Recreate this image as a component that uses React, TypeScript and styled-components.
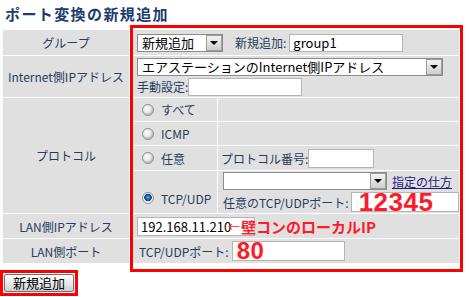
import React from 'react';
import styled, { createGlobalStyle } from 'styled-components';

const GlobalStyle = createGlobalStyle`
  body {
    margin: 0;
    background: #fff;
    font-family: "Noto Sans CJK JP", "Liberation Sans", sans-serif;
  }
`;

const Page = styled.div`
  position: relative;
  width: 469px;
  height: 297px;
  overflow: hidden;
`;

const Title = styled.h1`
  margin: 0 0 5px 0;
  padding: 3px 0 0 5px;
  height: 21px;
  font-size: 15px;
  line-height: 21px;
  font-weight: bold;
  color: #1c3b6e;
  letter-spacing: 1.4px;
`;

const Table = styled.table`
  margin-left: 2px;
  width: 458px;
  table-layout: fixed;
  border-collapse: separate;
  border-spacing: 1px;
  font-size: 12px;
  color: #283c5e;
`;

const Row = styled.tr<{ $h: number }>`
  height: ${(p) => p.$h}px;
`;

const Label = styled.td`
  background: #e0e0e0;
  text-align: center;
  vertical-align: middle;
  padding: 0;
  white-space: nowrap;
`;

const Cell = styled.td<{ $pl?: number }>`
  background: #e0e0e0;
  vertical-align: middle;
  padding: 0 0 0 ${(p) => p.$pl ?? 7}px;
  white-space: nowrap;
`;

const Line = styled.div<{ $gap?: number }>`
  display: flex;
  align-items: center;
  gap: ${(p) => p.$gap ?? 0}px;
`;

const Stack = styled.div`
  display: flex;
  flex-direction: column;
  gap: 2px;
`;

const SelectBox = styled.div<{ $w: number }>`
  box-sizing: border-box;
  width: ${(p) => p.$w}px;
  height: 18px;
  display: flex;
  align-items: center;
  justify-content: space-between;
  background: #fff;
  border: 1px solid #8c8c8c;
  font-size: 13px;
  color: #000;
  padding-left: 4px;
  line-height: 16px;
`;

const DropBtn = styled.span`
  box-sizing: border-box;
  width: 16px;
  height: 16px;
  display: flex;
  align-items: center;
  justify-content: center;
  background: linear-gradient(#f4f4f4, #cfcfcf);
  border: 1px solid #9a9a9a;
  &::after {
    content: '';
    border-left: 4px solid transparent;
    border-right: 4px solid transparent;
    border-top: 4px solid #000;
  }
`;

const Input = styled.div<{ $w: number; $h?: number }>`
  box-sizing: border-box;
  width: ${(p) => p.$w}px;
  height: ${(p) => p.$h ?? 18}px;
  background: #fff;
  border: 1px solid #b4b4b4;
  font-size: 13px;
  color: #000;
  padding-left: 3px;
  display: flex;
  align-items: center;
  overflow: visible;
`;

const Caption = styled.span`
  font-size: 12px;
  color: #283c5e;
`;

const Link = styled.a`
  margin-left: 5px;
  font-size: 12px;
  color: #1a1a80;
  text-decoration: underline;
`;

const Radio = styled.span<{ $on?: boolean }>`
  box-sizing: border-box;
  display: inline-block;
  width: 12px;
  height: 12px;
  border-radius: 50%;
  border: 1px solid #8e8e8e;
  background: ${(p) =>
    p.$on
      ? 'radial-gradient(circle at 50% 45%, #6ab4ff 0, #1668b8 2px, #0b3c78 3.5px, #e8e8e8 4px, #ffffff 6px)'
      : 'radial-gradient(circle at 40% 35%, #ffffff 0, #e6e6e6 4px, #bdbdbd 6px)'};
  margin-right: 7px;
`;

const RadioText = styled.span`
  font-size: 12px;
`;

const BigRed = styled.span<{ $size: number }>`
  font-family: "Liberation Sans", "DejaVu Sans", sans-serif;
  font-weight: bold;
  font-size: ${(p) => p.$size}px;
  line-height: 18px;
  color: #ff1a2a;
  letter-spacing: 0.5px;
`;

const Note = styled.span`
  display: inline-flex;
  align-items: center;
  margin-left: -27px;
  color: #ff1a2a;
  font-weight: bold;
  font-size: 15px;
  position: relative;
`;

const Arrow = styled.span`
  font-weight: normal;
  font-size: 12px;
  margin-right: 1px;
`;

const Marker = styled.div`
  position: absolute;
  left: 130px;
  top: 25px;
  width: 333px;
  height: 247px;
  box-sizing: border-box;
  border: 3px solid #ff0000;
  pointer-events: none;
`;

const ButtonFrame = styled.div`
  display: inline-block;
  margin-top: 6px;
  border: 3px solid #ff0000;
  padding: 1px;
`;

const Button = styled.button`
  box-sizing: border-box;
  width: 70px;
  height: 18px;
  padding: 0;
  font-family: "Noto Sans CJK JP", sans-serif;
  font-size: 13px;
  line-height: 14px;
  color: #000;
  border: 1px solid #707070;
  border-radius: 2px;
  background: linear-gradient(#fdfdfd, #e4e4e4 60%, #cfcfcf);
  display: block;
`;

const App: React.FC = () => {
  return (
    <Page>
      <GlobalStyle />
      <Title>ポート変換の新規追加</Title>
      <Table>
        <colgroup>
          <col style={{ width: 126 }} />
          <col style={{ width: 87 }} />
          <col style={{ width: 241 }} />
        </colgroup>
        <tbody>
          <Row $h={25}>
            <Label>グループ</Label>
            <Cell colSpan={2}>
              <Line>
                <SelectBox $w={86}>
                  新規追加
                  <DropBtn />
                </SelectBox>
                <Caption style={{ marginLeft: 12 }}>新規追加:</Caption>
                <Input $w={114} style={{ marginLeft: 3 }}>group1</Input>
              </Line>
            </Cell>
          </Row>
          <Row $h={41}>
            <Label>Internet側IPアドレス</Label>
            <Cell colSpan={2}>
              <Stack>
                <SelectBox $w={306}>
                  エアステーションのInternet側IPアドレス
                  <DropBtn />
                </SelectBox>
                <Line>
                  <Caption>手動設定:</Caption>
                  <Input $w={114}></Input>
                </Line>
              </Stack>
            </Cell>
          </Row>
          <Row $h={23}>
            <Label rowSpan={4}>プロトコル</Label>
            <Cell $pl={12}>
              <Line>
                <Radio />
                <RadioText>すべて</RadioText>
              </Line>
            </Cell>
            <Cell $pl={5}></Cell>
          </Row>
          <Row $h={23}>
            <Cell $pl={12}>
              <Line>
                <Radio />
                <RadioText>ICMP</RadioText>
              </Line>
            </Cell>
            <Cell $pl={5}></Cell>
          </Row>
          <Row $h={24}>
            <Cell $pl={12}>
              <Line>
                <Radio />
                <RadioText>任意</RadioText>
              </Line>
            </Cell>
            <Cell $pl={3}>
              <Line>
                <Caption>プロトコル番号:</Caption>
                <Input $w={66} $h={19}></Input>
              </Line>
            </Cell>
          </Row>
          <Row $h={42}>
            <Cell $pl={12}>
              <Line style={{ paddingTop: 12 }}>
                <Radio $on />
                <RadioText>TCP/UDP</RadioText>
              </Line>
            </Cell>
            <Cell $pl={5}>
              <Stack>
                <Line>
                  <SelectBox $w={164}>
                    <span />
                    <DropBtn />
                  </SelectBox>
                  <Link>指定の仕方</Link>
                </Line>
                <Line>
                  <Caption>任意のTCP/UDPポート:</Caption>
                  <Input $w={118} $h={20} style={{ marginLeft: 2, paddingLeft: 7 }}>
                    <BigRed $size={26}>12345</BigRed>
                  </Input>
                </Line>
              </Stack>
            </Cell>
          </Row>
          <Row $h={24}>
            <Label>LAN側IPアドレス</Label>
            <Cell colSpan={2}>
              <Line>
                <Input $w={118} $h={19}>192.168.11.210</Input>
                <Note>
                  <Arrow>←</Arrow>壁コンのローカルIP
                </Note>
              </Line>
            </Cell>
          </Row>
          <Row $h={24}>
            <Label>LAN側ポート</Label>
            <Cell colSpan={2} $pl={9}>
              <Line>
                <Caption>TCP/UDPポート:</Caption>
                <Input $w={113} $h={20} style={{ marginLeft: 3, paddingLeft: 4 }}>
                  <BigRed $size={24}>80</BigRed>
                </Input>
              </Line>
            </Cell>
          </Row>
        </tbody>
      </Table>
      <ButtonFrame>
        <Button>新規追加</Button>
      </ButtonFrame>
      <Marker />
    </Page>
  );
};

export default App;
